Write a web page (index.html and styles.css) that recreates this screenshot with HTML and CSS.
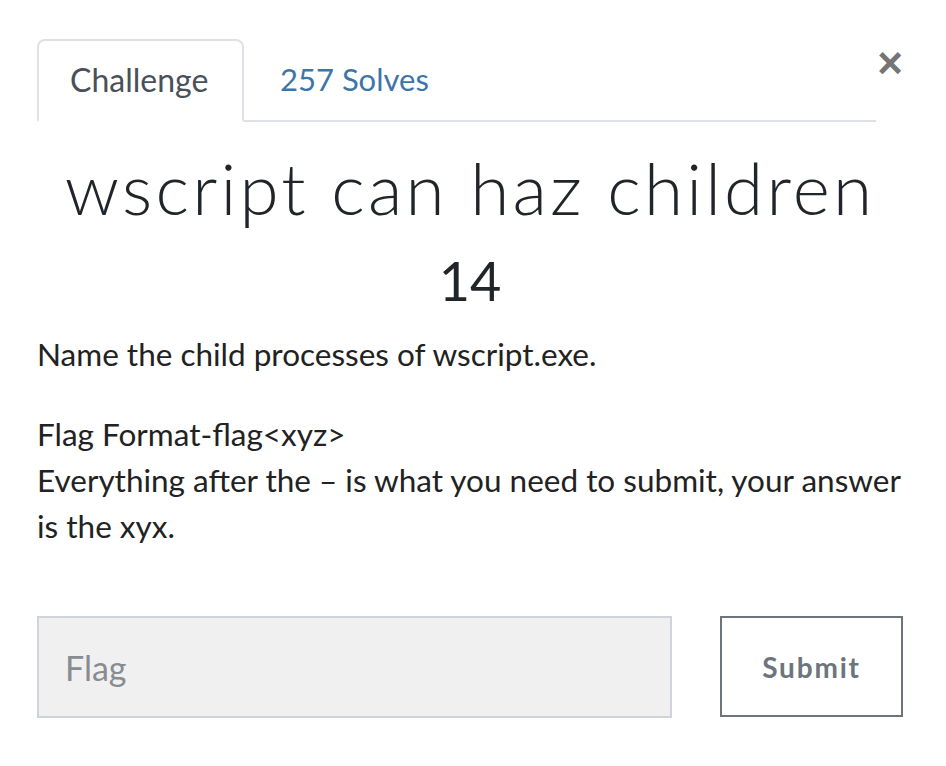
FILE: index.html
```html
<!DOCTYPE html>
<html>
<head>
	<title>wscript can haz children</title>
	<link rel="stylesheet" href="styles.css">
</head>
<body>
	<div class="modal">
		<div class="top">
			<ul class="tabs">
				<li class="tab active">Challenge</li>
				<li class="tab">257 Solves</li>
			</ul>
			<span class="close">&times;</span>
		</div>
		<h2 class="name">wscript can haz children</h2>
		<h3 class="value">14</h3>
		<div class="description">
			<p>Name the child processes of wscript.exe.</p>
			<p>Flag Format-flag&lt;xyz&gt;<br>Everything after the &ndash; is what you need to submit, your answer is the xyx.</p>
		</div>
		<div class="submit-row">
			<input type="text" class="flag-input" placeholder="Flag">
			<button class="submit">Submit</button>
		</div>
	</div>
</body>
</html>
```

FILE: styles.css
```css
*{
	padding: 0px;
	margin: 0px;
	box-sizing: border-box;
}
body{
	font-family: Lato, "Liberation Sans", sans-serif;
	color: #212529;
	background: #fff;
}
.modal{
	width: 946px;
	padding: 39px 43px 0 37px;
}
.top{
	display: flex;
	align-items: flex-start;
}
.tabs{
	list-style: none;
	display: flex;
	flex: 1;
	border-bottom: 2px solid #dee2e6;
	height: 83px;
}
.tab{
	font-size: 31px;
	padding: 19px 34px 0 34px;
	height: 83px;
	color: #3e75a8;
	border: 2px solid transparent;
}
.tab.active{
	font-size: 32px;
	color: #495057;
	border-color: #dee2e6 #dee2e6 #fff;
	border-radius: 8px 8px 0 0;
	background: #fff;
	width: 207px;
	padding-left: 31px;
}
.close{
	font-size: 44px;
	line-height: 1;
	font-weight: bold;
	color: #757575;
	margin: 2px 0 0 0;
	width: 27px;
	text-align: right;
	font-family: "Liberation Sans", sans-serif;
}
.name{
	font-family: Lato, sans-serif;
	font-weight: 300;
	font-size: 71px;
	letter-spacing: 3.2px;
	text-align: center;
	margin-top: 26px;
	line-height: 80px;
	color: #212529;
}
.value{
	font-weight: 400;
	font-size: 54px;
	text-align: center;
	line-height: 64px;
	margin-top: 21px;
	color: #212529;
}
.description{
	font-size: 31.5px;
	line-height: 46px;
	margin-top: 18px;
	color: #222;
}
.description p{
	margin-bottom: 34px;
}
.submit-row{
	display: flex;
	justify-content: space-between;
	margin-top: 67px;
}
.flag-input{
	width: 635px;
	height: 102px;
	background: #f0f0f0;
	border: 2px solid #ced4da;
	padding: 0 26px;
	font-family: Lato, sans-serif;
	font-size: 34px;
	color: #495057;
}
.flag-input::placeholder{
	color: #888c90;
}
.submit{
	width: 183px;
	height: 101px;
	background: #fff;
	border: 2px solid #6c757d;
	color: #6c757d;
	font-family: Lato, sans-serif;
	font-weight: bold;
	font-size: 28px;
	letter-spacing: 1.8px;
}
```
